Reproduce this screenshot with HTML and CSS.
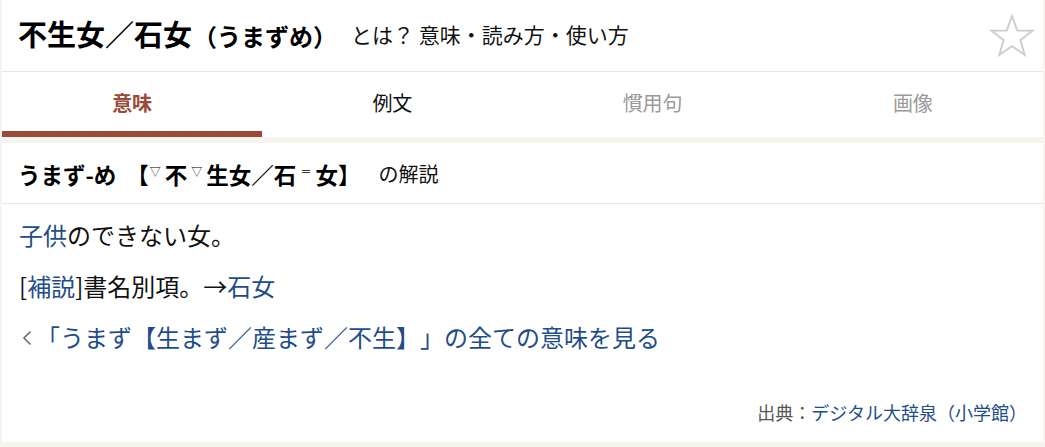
FILE: index.html
```html
<!DOCTYPE html>
<html lang="ja">
<head>
<meta charset="utf-8">
<link rel="stylesheet" href="styles.css">
</head>
<body>
<div class="page">
  <div class="card top">
    <header class="head">
      <h1 class="title">不生女／石女<span class="reading">（うまずめ）</span></h1>
      <span class="sub">とは？ 意味・読み方・使い方</span>
      <svg class="star" width="46" height="46" viewBox="0 0 46 46"><polygon points="23,3 28.2,17.4 43.5,17.8 31.4,27.2 35.7,41.8 23,33.2 10.3,41.8 14.6,27.2 2.5,17.8 17.8,17.4" fill="none" stroke="#cfcfcf" stroke-width="2" stroke-linejoin="miter"/></svg>
    </header>
    <nav class="tabs">
      <div class="tab active">意味</div>
      <div class="tab">例文</div>
      <div class="tab dim">慣用句</div>
      <div class="tab dim">画像</div>
    </nav>
  </div>
  <section class="card entry">
    <h2 class="entry-head"><span class="word">うまず-め<span class="br">【</span><span class="mk first">▽</span>不<span class="mk">▽</span>生女／石<span class="mk">＝</span>女】</span><span class="kai">の解説</span></h2>
    <div class="body">
      <p><a class="lk">子供</a>のできない女。</p>
      <p>[<a class="lk">補説</a>]書名別項。→<a class="lk">石女</a></p>
      <p class="more"><svg class="chev" width="10" height="16" viewBox="0 0 10 16"><polyline points="8.5,1.5 2,8 8.5,14.5" fill="none" stroke="#666" stroke-width="1.5"/></svg><a class="lk">「うまず【生まず／産まず／不生】」の全ての意味を見る</a></p>
    </div>
    <div class="src"><span class="src-l">出典：</span><a class="lk">デジタル大辞泉（小学館）</a></div>
  </section>
</div>
</body>
</html>
```

FILE: styles.css
```css
html, body {
  margin: 0;
  padding: 0;
  background: #f6f4ef;
}
body {
  font-family: "Noto Sans CJK JP", "Noto Sans", sans-serif;
  color: #111;
  text-spacing-trim: space-all;
}
.page {
  padding: 0 2px 4px 2px;
}
.card {
  background: #fff;
}
.head {
  border-bottom: 1px solid #e6e6e6;
  display: flex;
  align-items: center;
  padding-left: 16px;
  padding-bottom: 5px;
  box-sizing: border-box;
  height: 72px;
}
.title {
  margin: 0;
  font-size: 29px;
  font-weight: bold;
  color: #000;
  line-height: 1;
}
.reading {
  font-size: 24px;
  margin-left: 1px;
}
.sub {
  font-size: 21px;
  margin-left: 14px;
  margin-top: 2px;
  color: #111;
}
.star {
  margin-left: auto;
  margin-right: 8px;
  margin-top: 5px;
}
.tabs {
  display: grid;
  grid-template-columns: repeat(4, 1fr);
  height: 65px;
}
.tab {
  display: flex;
  align-items: center;
  justify-content: center;
  font-size: 20px;
  color: #111;
  border-bottom: 6px solid transparent;
  padding-top: 2px;
}
.tab.active {
  color: #9b4a37;
  font-weight: bold;
  border-bottom-color: #9b4a37;
}
.tab.dim {
  color: #9a9a9a;
}
.entry {
  margin-top: 6px;
}
.entry-head {
  margin: 0;
  border-bottom: 1px solid #e6e6e6;
  display: flex;
  align-items: center;
  padding-left: 16px;
  padding-top: 1px;
  box-sizing: border-box;
  height: 61px;
}
.word {
  font-size: 22.5px;
  font-weight: bold;
  color: #000;
}
.br {
  margin-left: 10px;
}
.mk {
  font-size: 11px;
  vertical-align: 8px;
  font-weight: normal;
  margin: 0 4px;
}
.mk.first {
  margin-left: 1px;
}
.kai {
  font-size: 20px;
  font-weight: normal;
  margin-left: 18px;
}
.body {
  padding: 16px 0 0 17px;
}
.body p {
  margin: 0 0 21px 0;
  font-size: 24px;
  line-height: 30px;
}
.body p.more {
  margin-bottom: 0;
  display: flex;
  align-items: center;
}
.chev {
  margin: 1px 4px 0 3px;
}
.lk {
  color: #1f4d8a;
  text-decoration: none;
}
.src {
  text-align: right;
  padding: 0 16px 18px 0;
  margin-top: 48px;
  font-size: 18px;
  line-height: 24px;
}
.src-l {
  color: #555;
}
```
